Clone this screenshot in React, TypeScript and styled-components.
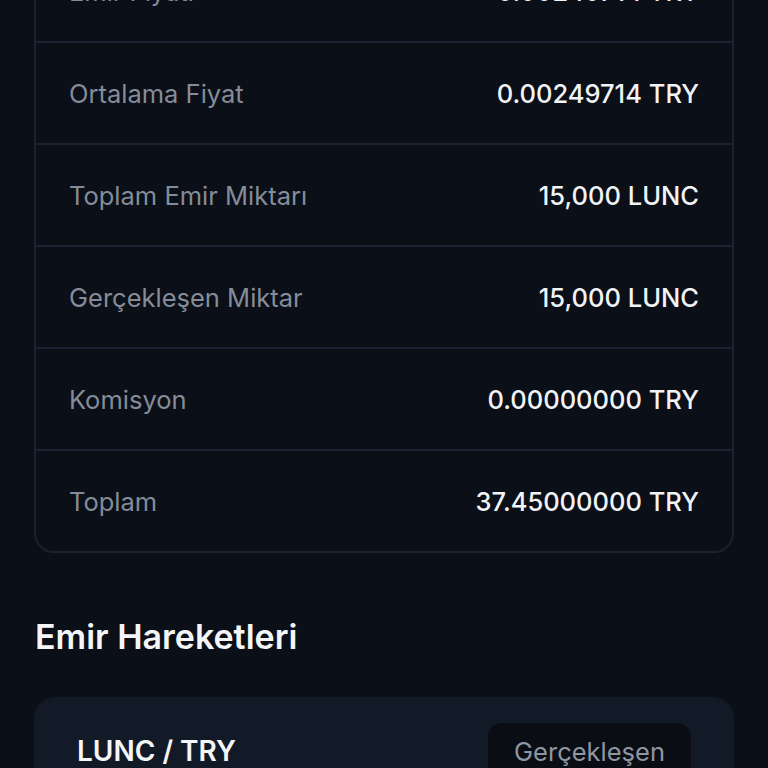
import styled, { createGlobalStyle } from 'styled-components'

const GlobalStyle = createGlobalStyle`
  html, body {
    margin: 0;
    padding: 0;
    background: #0b0f17;
  }
  body {
    font-family: Inter, 'Noto Sans', 'Liberation Sans', sans-serif;
    -webkit-font-smoothing: antialiased;
  }
  * { box-sizing: border-box; }
`

type Detail = { label: string, value: string }

const details: Detail[] = [
  { label: 'Emir Fiyatı', value: '0.00249714 TRY' },
  { label: 'Ortalama Fiyat', value: '0.00249714 TRY' },
  { label: 'Toplam Emir Miktarı', value: '15,000 LUNC' },
  { label: 'Gerçekleşen Miktar', value: '15,000 LUNC' },
  { label: 'Komisyon', value: '0.00000000 TRY' },
  { label: 'Toplam', value: '37.45000000 TRY' },
]

const App = () => {
  return (
    <>
      <GlobalStyle />
      <Page>
        {/* page is scrolled: first row is partly above the viewport */}
        <DetailCard>
          {details.map((d) => (
            <Row key={d.label}>
              <Label>{d.label}</Label>
              <Value>{d.value}</Value>
            </Row>
          ))}
        </DetailCard>

        <SectionTitle>Emir Hareketleri</SectionTitle>

        <MoveCard>
          <MoveHeader>
            <Pair>LUNC / TRY</Pair>
            <Status>Gerçekleşen</Status>
          </MoveHeader>
        </MoveCard>
      </Page>
    </>
  )
}

export default App

const Page = styled.div`
  padding: 0 34px 40px;
  height: 768px;
  overflow: hidden;
`

const DetailCard = styled.div`
  margin-top: -61px;
  border: 2px solid #1a2130;
  border-radius: 20px;
  overflow: hidden;
`

const Row = styled.div`
  display: flex;
  align-items: center;
  justify-content: space-between;
  height: 100px;
  padding: 0 33px;

  & + & {
    border-top: 2px solid #1a2130;
    height: 102px;
  }
`

const Label = styled.span`
  font-size: 25.5px;
  color: #858c99;
`

const Value = styled.span`
  font-size: 25.5px;
  font-weight: 500;
  color: #f1f3f6;
`

const SectionTitle = styled.h2`
  margin: 64px 0 40px 1px;
  font-size: 34px;
  line-height: 40px;
  font-weight: 600;
  color: #f4f5f7;
`

const MoveCard = styled.div`
  background: #131a27;
  border-radius: 22px;
  padding: 26px 43px;
`

const MoveHeader = styled.div`
  display: flex;
  align-items: center;
  justify-content: space-between;
`

const Pair = styled.span`
  font-size: 28px;
  font-weight: 600;
  color: #f4f5f7;
`

const Status = styled.span`
  display: inline-flex;
  align-items: center;
  height: 56px;
  padding: 0 26px;
  border-radius: 14px;
  background: #0a0d14;
  font-size: 25.5px;
  color: #8f96a3;
`
